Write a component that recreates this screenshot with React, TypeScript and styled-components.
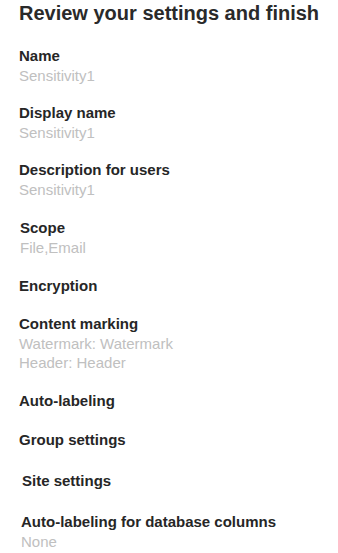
import styled, { createGlobalStyle } from 'styled-components';

interface Setting {
  label: string;
  values?: string[];
  indent?: number;
  space?: number;
}

const settings: Setting[] = [
  { label: 'Name', values: ['Sensitivity1'], space: 21 },
  { label: 'Display name', values: ['Sensitivity1'], space: 18 },
  { label: 'Description for users', values: ['Sensitivity1'], space: 18 },
  { label: 'Scope', values: ['File,Email'], indent: 1 },
  { label: 'Encryption' },
  { label: 'Content marking', values: ['Watermark: Watermark', 'Header: Header'], space: 18 },
  { label: 'Auto-labeling' },
  { label: 'Group settings' },
  { label: 'Site settings', indent: 3, space: 21 },
  { label: 'Auto-labeling for database columns', values: ['None'], indent: 2, space: 21 },
];

const App = () => {
  return (
    <>
      <GlobalStyle />
      <StyledReview>
        <Title>Review your settings and finish</Title>
        <SettingList>
          {settings.map((s) => (
            <SettingItem key={s.label} $indent={s.indent ?? 0} $space={s.space ?? 19}>
              <Label>{s.label}</Label>
              {s.values?.map((v) => (
                <Value key={v}>{v}</Value>
              ))}
            </SettingItem>
          ))}
        </SettingList>
      </StyledReview>
    </>
  );
};

export default App;

const GlobalStyle = createGlobalStyle`
  body {
    margin: 0;
    background: #fff;
    font-family: "Liberation Sans", Arial, sans-serif;
  }
`;

const StyledReview = styled.main`
  padding: 1px 0 0 19px;
`;

const Title = styled.h1`
  margin: 0;
  font-size: 20px;
  line-height: 24px;
  font-weight: 700;
  color: #2a2a2a;
`;

const SettingList = styled.ul`
  list-style: none;
  margin: 0;
  padding: 0;
`;

const SettingItem = styled.li<{ $indent: number; $space: number }>`
  margin-top: ${(p) => p.$space}px;
  padding-left: ${(p) => p.$indent}px;
`;

const Label = styled.div`
  font-size: 15px;
  line-height: 20px;
  font-weight: 700;
  color: #262626;
`;

const Value = styled.div`
  font-size: 15px;
  line-height: 19px;
  color: #c0c0c0;
`;
